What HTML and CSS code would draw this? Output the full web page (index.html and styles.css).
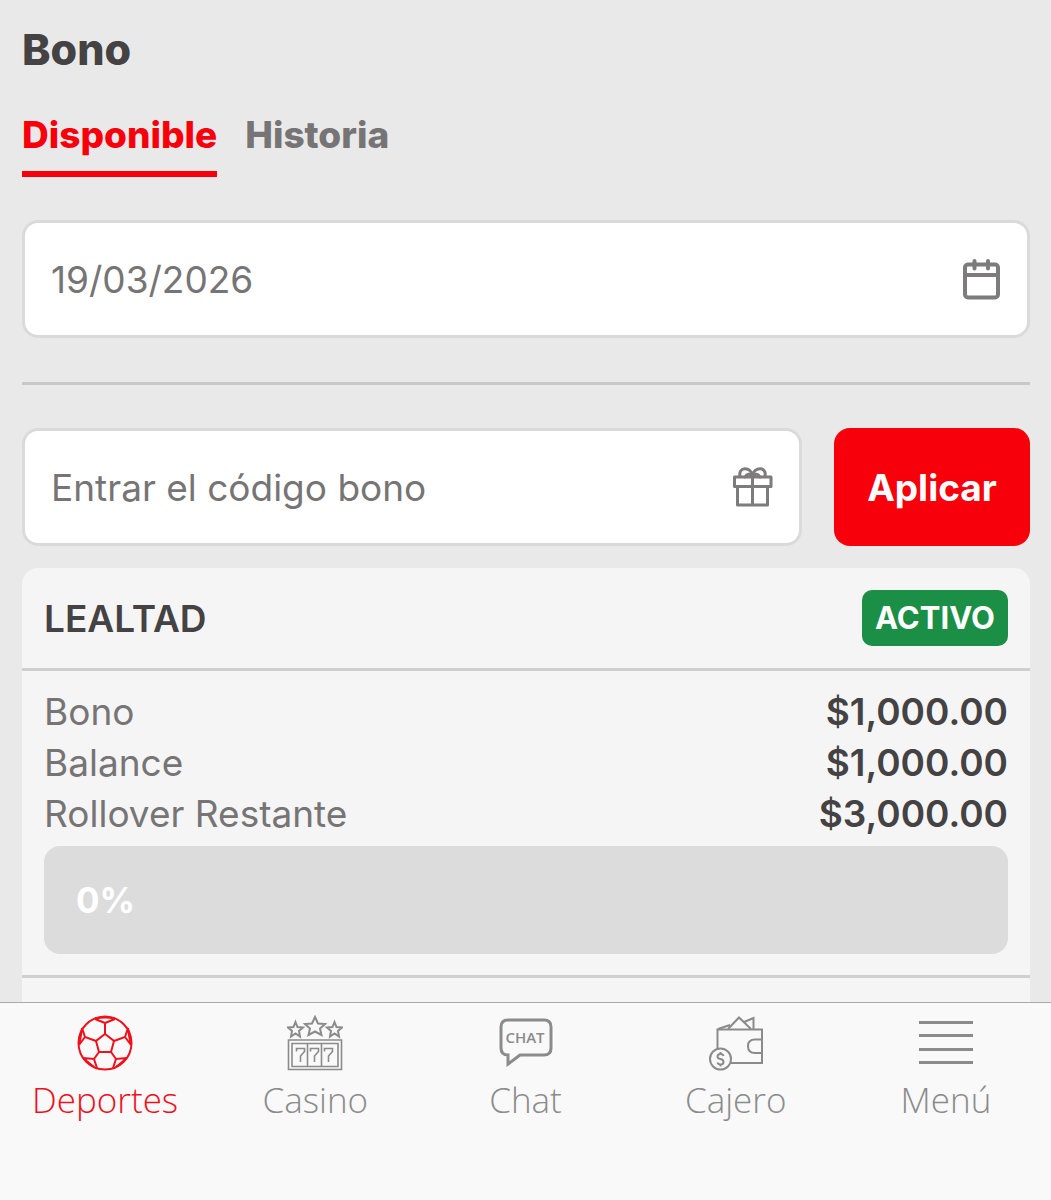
FILE: index.html
```html
<!DOCTYPE html>
<html lang="es">

<head>
    <meta charset="UTF-8">
    <meta name="viewport" content="width=device-width, initial-scale=1.0">
    <title>Bono</title>
    <link rel="stylesheet" href="styles.css">
</head>

<body>
    <main class="page">
        <h1 class="title">Bono</h1>
        <div class="tabs">
            <a class="tab active" href="#disponible">Disponible</a>
            <a class="tab" href="#historia">Historia</a>
        </div>

        <div class="field">
            <input type="text" id="fecha" aria-label="Fecha" value="19/03/2026">
            <label for="fecha">
                <svg class="field-icon" viewBox="0 0 44 44" aria-hidden="true">
                    <rect x="6" y="7.500" width="33" height="33" rx="3" />
                    <path d="M6 18H39M15.500 4V11.500M29 4V11.500" />
                </svg>
            </label>
        </div>

        <hr class="divider">

        <form class="code-form">
            <div class="field">
                <input type="text" id="codigo" aria-label="Código bono" placeholder="Entrar el código bono">
                <label for="codigo">
                    <svg class="field-icon gift" viewBox="0 0 44 44" aria-hidden="true">
                        <path d="M3.500 12H40V21.500H3.500ZM6.500 21.500V40H36.500V21.500M21.500 12V40" />
                        <path d="M9 11C7 1.500 20 1 21.500 11C23 1 36 1.500 34 11M21.500 11Q17 7 14 12M21.500 11Q26 7 29 12" />
                    </svg>
                </label>
            </div>
            <button type="button" class="apply">Aplicar</button>
        </form>

        <section class="card">
            <header class="card-header">
                <h2>LEALTAD</h2>
                <span class="badge">ACTIVO</span>
            </header>
            <div class="card-body">
                <dl>
                    <div class="row"><dt>Bono</dt><dd>$1,000.00</dd></div>
                    <div class="row"><dt>Balance</dt><dd>$1,000.00</dd></div>
                    <div class="row"><dt>Rollover Restante</dt><dd>$3,000.00</dd></div>
                </dl>
                <div class="progress">0%</div>
            </div>
        </section>
    </main>

    <nav class="bottom-nav">
        <a class="nav-item active" href="#deportes">
            <svg viewBox="0 0 56 56" aria-hidden="true">
                <circle cx="28" cy="28" r="26.500" />
                <path d="M28 19L37 26L34 37H22L19 26Z" />
                <path d="M28 19V8L18 4M28 8L38 4M18 4Q28 1 38 4M37 26L48 22L51 13M48 22L54 30M19 26L8 22L5 13M8 22L2 30M34 37L39 44L50 43M39 44L36 53M22 37L17 44L6 43M17 44L20 53M51 13Q52 22 54 30M5 13Q4 22 2 30M50 43L39 52M6 43L17 52" />
            </svg>
            <span>Deportes</span>
        </a>
        <a class="nav-item" href="#casino">
            <svg viewBox="0 0 56 56" aria-hidden="true">
                <path d="M28 2L31 8.500L38 9L33 13.500L34.500 20L28 16.500L21.500 20L23 13.500L18 9L25 8.500Z" />
                <path d="M8.500 7L10.500 12L16 12.500L12 16L13 21.500L8.500 18.500L4 21.500L5 16L1 12.500L6.500 12Z" />
                <path d="M47.500 7L49.500 12L55 12.500L51 16L52 21.500L47.500 18.500L43 21.500L44 16L40 12.500L45.500 12Z" />
                <path class="thin" d="M1.500 25H54.500V54.500H1.500ZM5 28.500H51V51.500H5ZM20.500 28.500V51.500M34.500 28.500V51.500" />
                <path class="thin" d="M9.500 36.500V33.500H17.500V36.500L13.500 41V47M23.500 36.500V33.500H31.500V36.500L27.500 41V47M37.500 36.500V33.500H45.500V36.500L41.500 41V47" />
            </svg>
            <span>Casino</span>
        </a>
        <a class="nav-item" href="#chat">
            <svg viewBox="0 0 56 56" aria-hidden="true">
                <path class="thick" d="M10 5H46Q53 5 53 12V33Q53 40 46 40H22L10 49V40Q3 40 3 33V12Q3 5 10 5Z" />
                <text x="27" y="28" text-anchor="middle">CHAT</text>
            </svg>
            <span>Chat</span>
        </a>
        <a class="nav-item" href="#cajero">
            <svg viewBox="0 0 56 56" aria-hidden="true">
                <path d="M9.500 34V14.500H54V48H23M54 24.500H47Q40 24.500 40 31Q40 38 47 38H54" />
                <path d="M10 14L22 10M20 14L31 2.500L43 14M36 7L45.500 3V14" />
                <circle cx="12.500" cy="44" r="10.500" />
                <path d="M15.500 41Q15 39 12.500 39Q9.500 39 9.500 41.500Q9.500 43.500 12.500 44Q15.500 44.500 15.500 47Q15.500 49.500 12.500 49.500Q10 49.500 9.500 47.500M12.500 37V39M12.500 49.500V51.500" />
            </svg>
            <span>Cajero</span>
        </a>
        <a class="nav-item" href="#menu">
            <svg viewBox="0 0 56 56" aria-hidden="true">
                <path class="thick" d="M1 7.500H55M1 20.500H55M1 34.500H55M1 47.500H55" />
            </svg>
            <span>Menú</span>
        </a>
    </nav>
</body>

</html>
```
FILE: styles.css
```css
* {
    box-sizing: border-box;
    margin: 0;
    padding: 0;
}

body {
    display: flex;
    flex-direction: column;
    min-height: 100vh;
    background-color: #e9e9e9;
    color: #444243;
    font-family: Inter, Roboto, sans-serif;
    font-size: 37px;
}

a {
    text-decoration: none;
}

.page {
    display: flex;
    flex-direction: column;
    flex: 1;
    padding: 22px 21px 0 22px;
}

.title {
    font-size: 43px;
    line-height: 54px;
    font-weight: 800;
}

/* Tabs */
.tabs {
    display: flex;
    gap: 28px;
    margin-top: 32px;
}

.tab {
    padding-bottom: 10px;
    border-bottom: 6px solid transparent;
    color: #767475;
    font-size: 37px;
    line-height: 53px;
    font-weight: 800;
}

.tab.active {
    color: #f7000b;
    border-color: #f7000b;
}

/* Inputs */
.field {
    display: flex;
    align-items: center;
    flex: 1;
    min-width: 0;
    height: 118px;
    padding: 0 24px 0 26px;
    background-color: #fff;
    border: 3px solid #dadada;
    border-radius: 16px;
}

.tabs + .field {
    flex: none;
    margin-top: 43px;
}

.field input {
    flex: 1;
    min-width: 0;
    border: none;
    outline: none;
    background: none;
    color: #767475;
    font: inherit;
}

.field input::placeholder {
    color: #767475;
    opacity: 1;
}

.field label {
    display: flex;
}

.field-icon {
    width: 44px;
    height: 44px;
    fill: none;
    stroke: #7d7b7c;
    stroke-width: 4;
    stroke-linecap: round;
    stroke-linejoin: round;
}

.field-icon.gift {
    stroke-width: 3;
}

.divider {
    margin: 44px 0 43px;
    border: none;
    border-top: 3px solid #c8c8c8;
}

.code-form {
    display: flex;
    gap: 32px;
}

.apply {
    width: 196px;
    height: 118px;
    border: none;
    border-radius: 16px;
    background-color: #f7000b;
    color: #fff;
    font: inherit;
    font-weight: 700;
    cursor: pointer;
}

/* Bonus card */
.card {
    flex: 1;
    margin-top: 22px;
    background-color: #f5f5f5;
    border-radius: 16px 16px 0 0;
}

.card-header {
    display: flex;
    align-items: center;
    justify-content: space-between;
    height: 103px;
    padding: 0 22px;
    border-bottom: 3px solid #cfcfcf;
}

.card-header h2 {
    font-size: 37px;
    font-weight: 600;
}

.badge {
    padding: 0 13px;
    border-radius: 10px;
    background-color: #1a8f45;
    color: #fff;
    font-size: 31px;
    line-height: 56px;
    font-weight: 700;
}

.card-body {
    padding: 15px 22px 21px;
    border-bottom: 3px solid #cfcfcf;
}

.row {
    display: flex;
    justify-content: space-between;
    line-height: 51px;
}

.row dt {
    color: #767475;
}

.row dd {
    font-weight: 600;
}

.progress {
    margin-top: 7px;
    padding: 0 32px;
    border-radius: 16px;
    background-color: #dcdcdc;
    color: #fff;
    font-size: 35px;
    line-height: 108px;
    font-weight: 700;
}

/* Bottom navigation */
.bottom-nav {
    display: flex;
    height: 198px;
    padding-top: 12px;
    border-top: 1px solid #aaa;
    background-color: #f9f9f9;
    font-family: "Open Sans", sans-serif;
    font-weight: 300;
}

.nav-item {
    display: flex;
    flex: 1;
    flex-direction: column;
    align-items: center;
    color: #8b8b8b;
    font-size: 35px;
    line-height: 58px;
}

.nav-item.active {
    color: #f0101b;
}

.nav-item svg {
    width: 56px;
    height: 56px;
    fill: none;
    stroke: currentColor;
    stroke-width: 2;
}

.nav-item .thick {
    stroke-width: 3;
}

.nav-item .thin {
    stroke-width: 1.6;
}

.nav-item text {
    fill: currentColor;
    stroke: none;
    font-size: 15px;
    font-weight: 600;
}
```
